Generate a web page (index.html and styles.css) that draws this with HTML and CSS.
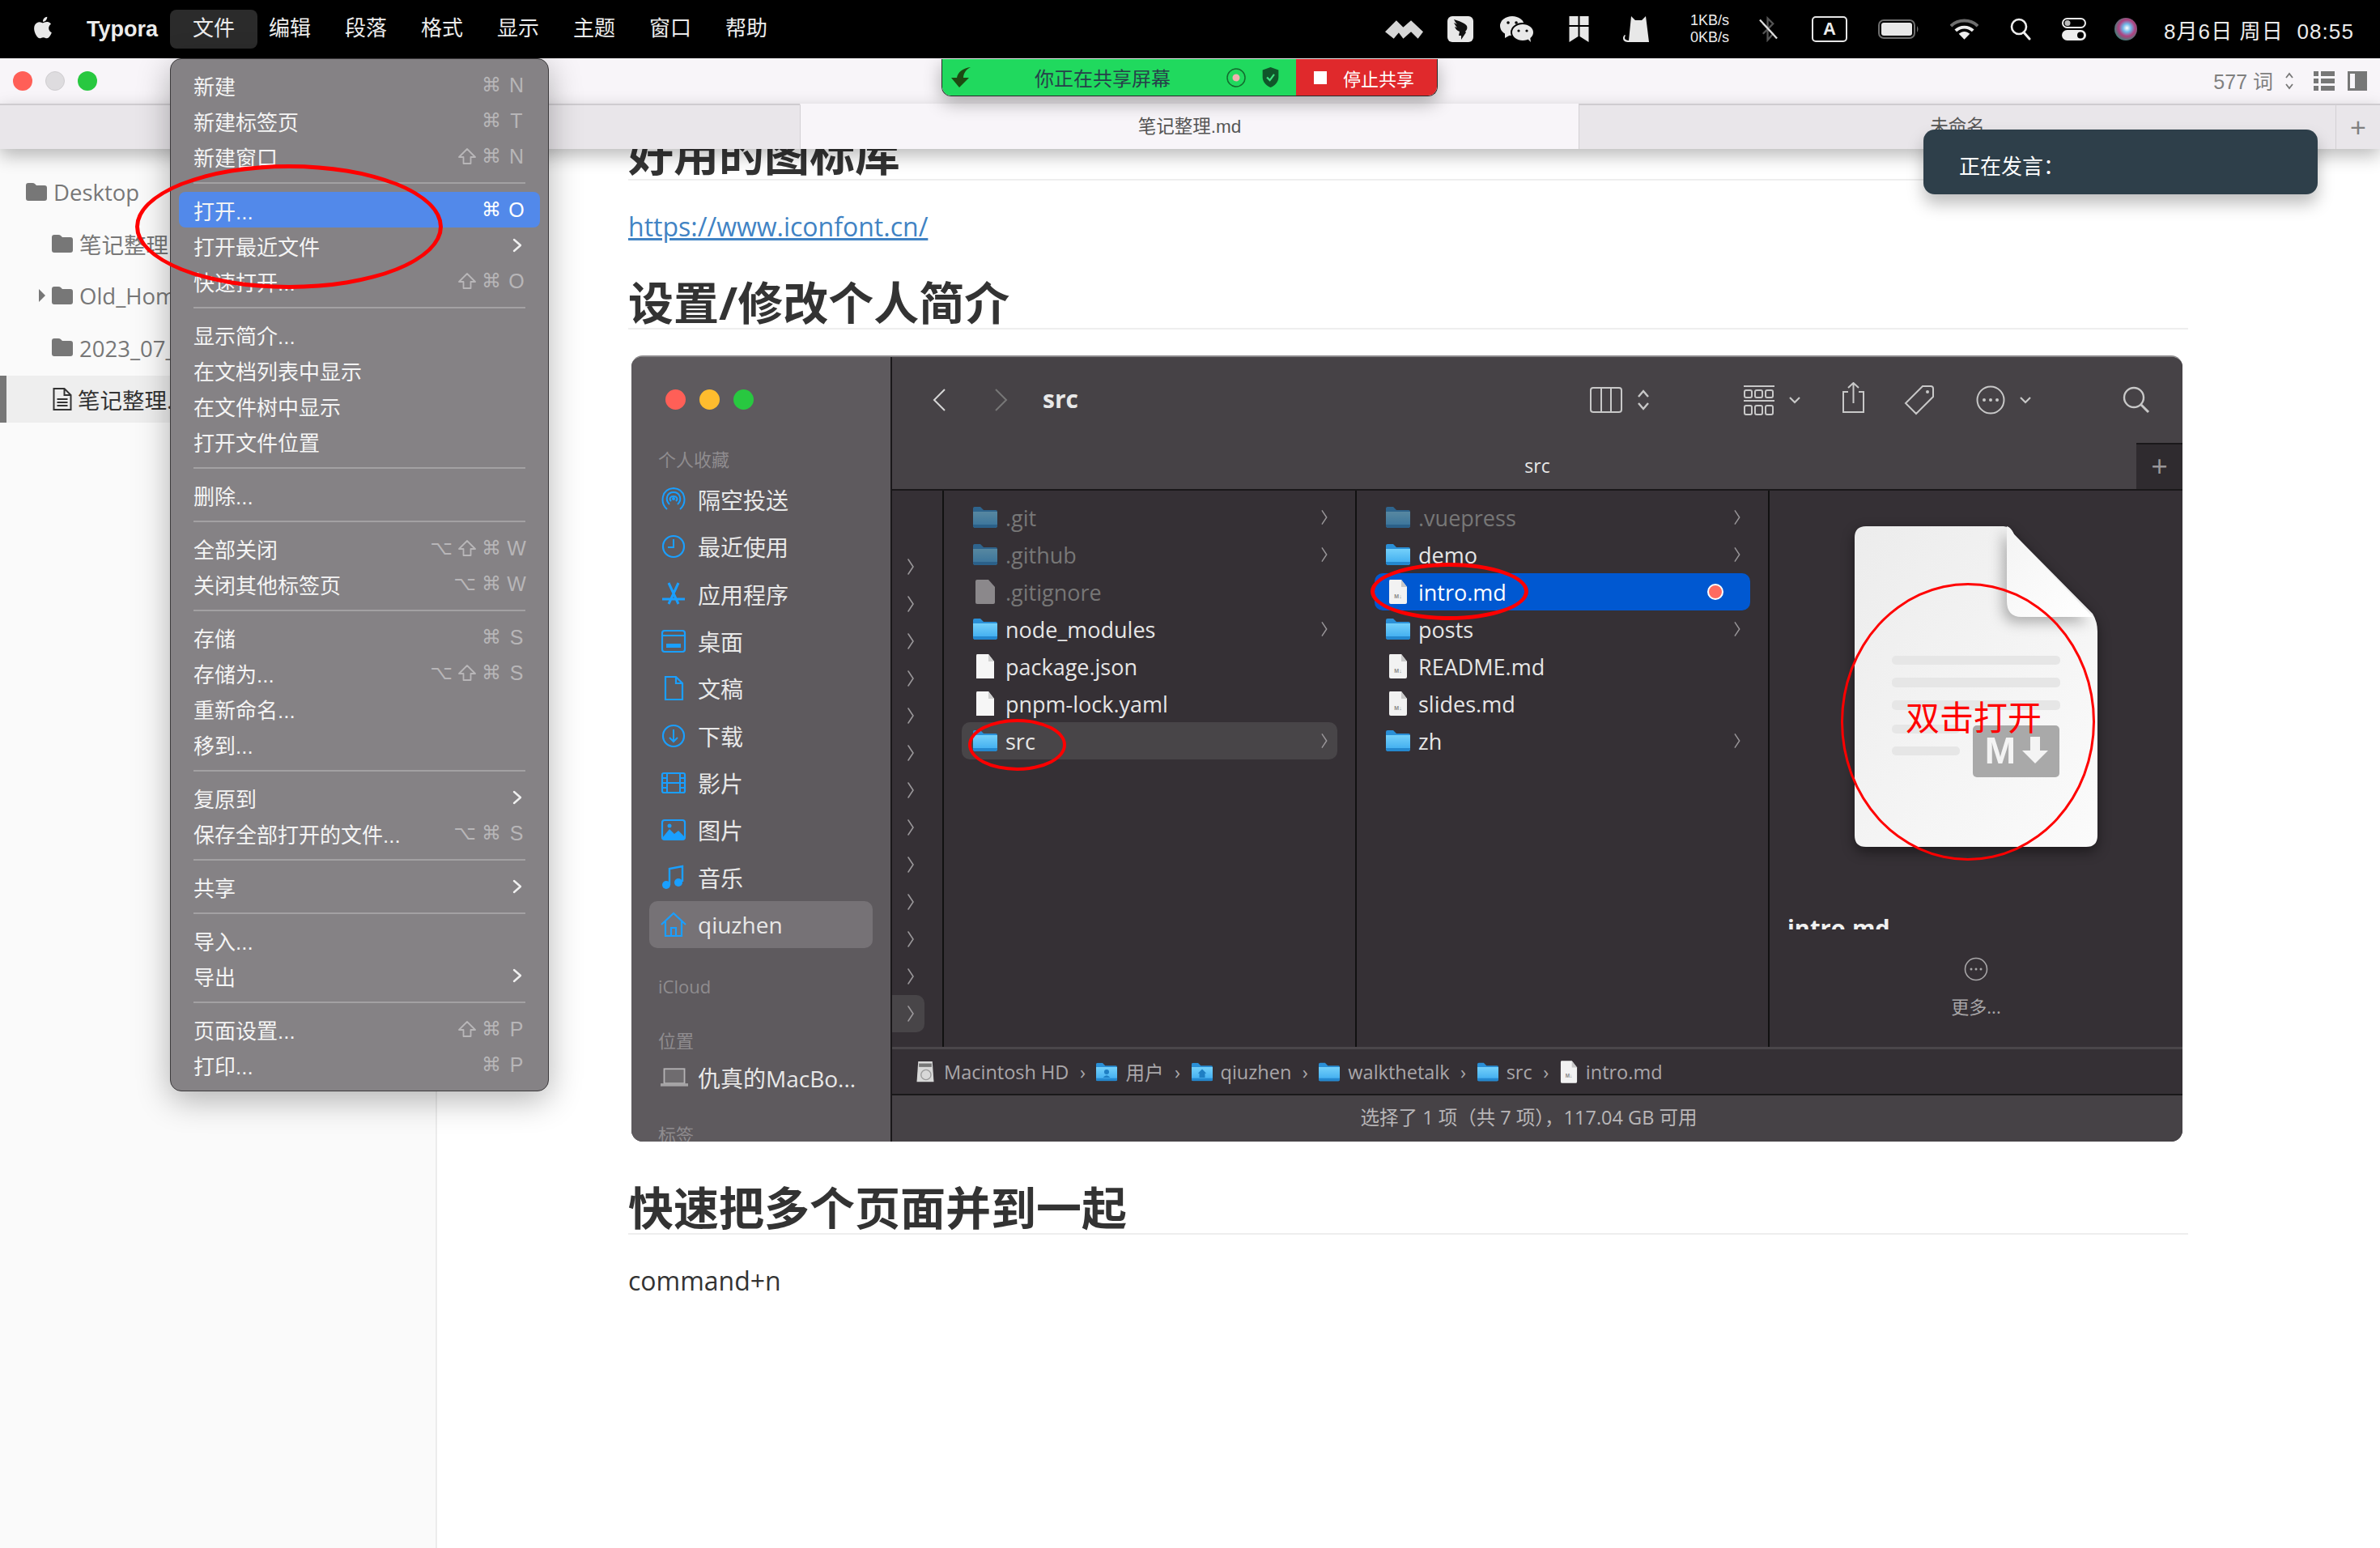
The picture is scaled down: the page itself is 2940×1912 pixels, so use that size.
FILE: index.html
```html
<!DOCTYPE html>
<html lang="zh-CN">
<head>
    <meta charset="UTF-8">
    <title>Typora</title>
    <link rel="stylesheet" href="styles.css">
</head>
<body>
<svg class="defs" aria-hidden="true">
    <defs>
        <linearGradient id="folderBody" x1="0" y1="0" x2="0" y2="1">
            <stop offset="0" stop-color="#74d0fa"/>
            <stop offset="1" stop-color="#3aa9ee"/>
        </linearGradient>
        <radialGradient id="siriBall" cx=".55" cy=".45" r=".6">
            <stop offset="0" stop-color="#ffffff"/>
            <stop offset=".3" stop-color="#6fb7e8"/>
            <stop offset=".6" stop-color="#b0407f"/>
            <stop offset="1" stop-color="#2f8a78"/>
        </radialGradient>
        <linearGradient id="docBody" x1="0" y1="0" x2="1" y2="1">
            <stop offset="0" stop-color="#ececec"/>
            <stop offset="1" stop-color="#fbfbfb"/>
        </linearGradient>
        <linearGradient id="docFold" x1="0" y1="0" x2="1" y2="1">
            <stop offset="0" stop-color="#f4f4f4"/>
            <stop offset="1" stop-color="#ffffff"/>
        </linearGradient>
    </defs>
    <symbol id="folder" viewBox="0 0 30 26">
        <path d="M0 2Q0 0 2 0H9L13 4H28Q30 4 30 6V7H0Z" fill="#2a8fd6"/>
        <path d="M0 6H30V23Q30 26 27 26H3Q0 26 0 23Z" fill="url(#folderBody)"/>
        <path d="M0 22H30V23Q30 26 27 26H3Q0 26 0 23Z" fill="#2488cf"/>
    </symbol>
    <symbol id="graydoc" viewBox="0 0 24 30">
        <path d="M2 0H16L24 9V28Q24 30 22 30H2Q0 30 0 28V2Q0 0 2 0Z" fill="#8b888b"/>
    </symbol>
    <symbol id="plainfile" viewBox="0 0 24 30">
        <path d="M2 0H16L23 9V30H1V2Q1 0 2 0Z" fill="#f6f6f6"/>
        <path d="M16 0V9H23Z" fill="#cfcfcf"/>
    </symbol>
    <symbol id="mdfile" viewBox="0 0 24 30">
        <path d="M2 0H16L23 9V28Q23 30 21 30H3Q1 30 1 28V2Q1 0 2 0Z" fill="#f2f2f2"/>
        <path d="M16 0V9H23Z" fill="#c8c8c8"/>
        <text x="12" y="23" class="md-mini">M↓</text>
    </symbol>
    <symbol id="chev" viewBox="0 0 10 22">
        <path d="M2 2L8 11L2 20" fill="none" stroke="currentColor" stroke-width="1.6" stroke-linecap="round"/>
    </symbol>
    <symbol id="treefolder" viewBox="0 0 26 22">
        <path d="M0 3Q0 0 3 0H8Q10 0 11 1L13 3H23Q26 3 26 6V19Q26 22 23 22H3Q0 22 0 19Z" fill="#777"/>
    </symbol>
    <symbol id="stop-chev" viewBox="0 0 12 18">
        <path d="M2 2L10 9L2 16" fill="none" stroke="#f0f0f0" stroke-width="2.4" stroke-linecap="round" stroke-linejoin="round"/>
    </symbol>
    <symbol id="shiftkey" viewBox="0 0 22 20">
        <path d="M11 1L21 11H15.500V19H6.500V11H1Z" fill="none" stroke="currentColor" stroke-width="1.800" stroke-linejoin="round"/>
    </symbol>
</svg>

<div class="page">
    <!-- macOS menu bar -->
    <header class="menubar">
        <div class="menubar-left">
            <svg class="apple" viewBox="0 0 24 24"><path fill="#e8e8e8" d="M18.71 19.5c-.83 1.24-1.71 2.45-3.05 2.47-1.34.03-1.77-.79-3.29-.79-1.53 0-2 .77-3.27.82-1.31.05-2.3-1.32-3.14-2.53C4.25 17 2.94 12.45 4.7 9.39c.87-1.52 2.43-2.48 4.12-2.51 1.28-.02 2.5.87 3.29.87.78 0 2.26-1.07 3.81-.91.65.03 2.47.26 3.64 1.98-.09.06-2.17 1.28-2.15 3.81.03 3.02 2.65 4.03 2.68 4.04-.03.07-.42 1.44-1.38 2.83M13 3.5c.73-.83 1.94-1.46 2.94-1.5.13 1.17-.34 2.35-1.04 3.19-.69.85-1.83 1.51-2.95 1.42-.15-1.15.41-2.35 1.05-3.11z"/></svg>
            <span class="app-name">Typora</span>
            <span class="mb-item mb-active">文件</span>
            <span class="mb-item">编辑</span>
            <span class="mb-item">段落</span>
            <span class="mb-item">格式</span>
            <span class="mb-item">显示</span>
            <span class="mb-item">主题</span>
            <span class="mb-item">窗口</span>
            <span class="mb-item">帮助</span>
        </div>
        <div class="menubar-right">
            <svg class="st st-mountain" viewBox="0 0 44 21"><path fill="#d6d6d6" d="M0 13L13 0L21 8L10 21ZM15 13L30 0L44 13L38 21L30 13L21 21Z"/></svg>
            <svg class="st st-ding" viewBox="0 0 32 32"><rect width="32" height="32" rx="6" fill="#e8e8e8"/><path fill="#111" d="M8 4C14 6 21 8 24 12C25 15 24 17 22 19L23 20L17 29L17 24L14 24L15 19C12 18 10 16 9 13L12 14C10 12 9 10 8 8L12 10C10 8 9 6 8 4Z"/></svg>
            <svg class="st st-wechat" viewBox="0 0 42 32"><ellipse cx="15" cy="12" rx="15" ry="12" fill="#e8e8e8"/><path d="M6 20L6 27L13 23Z" fill="#e8e8e8"/><ellipse cx="28" cy="20" rx="14" ry="11" fill="#e8e8e8" stroke="#000" stroke-width="2"/><path d="M34 28L38 32L37 25Z" fill="#e8e8e8"/><circle cx="10" cy="8" r="1.8" fill="#000"/><circle cx="20" cy="8" r="1.8" fill="#000"/><circle cx="23" cy="18" r="1.6" fill="#000"/><circle cx="33" cy="18" r="1.6" fill="#000"/></svg>
            <svg class="st st-mark" viewBox="0 0 24 32"><path fill="#e8e8e8" d="M0 0H11V11H0ZM13 0H24V11H13ZM0 13H11V25L0 32ZM13 13H24V32L13 25Z"/></svg>
            <svg class="st st-cat" viewBox="0 0 32 32"><path fill="#e8e8e8" d="M10 0L15 5H23L28 0L32 32H9C5 32 0 32 0 27C0 25 1 24 2 23L3 24C2 25 2 26 2 27C2 29 5 30 7 30Z"/></svg>
            <div class="st-speed"><span>1KB/s</span><span>0KB/s</span></div>
            <svg class="st st-blue" viewBox="0 0 24 32"><path fill="none" stroke="#555" stroke-width="2.4" d="M5 9L18 22L11 30V2L18 9L5 22"/><path stroke="#ddd" stroke-width="2.4" d="M1 4L23 28"/></svg>
            <div class="st st-input">A</div>
            <svg class="st st-battery" viewBox="0 0 51 24"><rect x="1" y="1" width="44" height="22" rx="6" fill="none" stroke="#6e6e6e" stroke-width="2"/><rect x="4" y="4" width="38" height="16" rx="3" fill="#e8e8e8"/><path d="M48 8Q51 12 48 16Z" fill="#6e6e6e"/></svg>
            <svg class="st st-wifi" viewBox="0 0 36 26"><path d="M1 9C10 0 26 0 35 9" fill="none" stroke="#6e6e6e" stroke-width="4"/><path d="M7 15C13 9 23 9 29 15" fill="none" stroke="#eee" stroke-width="4"/><path d="M11 19C15 15 21 15 25 19L18 26Z" fill="#eee"/></svg>
            <svg class="st st-search" viewBox="0 0 26 28"><circle cx="11" cy="11" r="9" fill="none" stroke="#eee" stroke-width="2.6"/><path d="M17 18L24 26" stroke="#eee" stroke-width="3" stroke-linecap="round"/></svg>
            <svg class="st st-control" viewBox="0 0 30 28"><rect x="1" y="1" width="28" height="11" rx="5.5" fill="none" stroke="#eee" stroke-width="2"/><circle cx="7" cy="6.500" r="3.500" fill="#bbb"/><rect y="15" width="30" height="13" rx="6.500" fill="#eee"/><circle cx="23" cy="21.500" r="4" fill="#000"/></svg>
            <svg class="st st-siri" viewBox="0 0 28 28"><circle cx="14" cy="14" r="14" fill="url(#siriBall)"/></svg>
            <span class="st-clock">8月6日 周日&nbsp;&nbsp;08:55</span>
        </div>
    </header>

    <!-- typora title row and tabs -->
    <div class="titlerow">
        <div class="lights">
            <span class="light light-red"></span>
            <span class="light light-idle"></span>
            <span class="light light-green"></span>
        </div>
        <div class="wordcount">
            <span class="wc-text">577 词</span>
            <svg class="wc-updown" viewBox="0 0 12 26"><path d="M2 9L6 4L10 9M2 17L6 22L10 17" fill="none" stroke="#777" stroke-width="1.800"/></svg>
            <svg class="wc-list" viewBox="0 0 26 24"><path fill="#777" d="M0 0H6V6H0ZM9 0H26V6H9ZM0 9H6V15H0ZM9 9H26V15H9ZM0 18H6V24H0ZM9 18H26V24H9Z"/></svg>
            <svg class="wc-panel" viewBox="0 0 24 24"><path fill="#777" d="M0 0H24V24H0ZM3 3V21H9V3Z"/></svg>
        </div>
    </div>
    <div class="tabs">
        <div class="tab tab-first"></div>
        <div class="tab tab-current">笔记整理.md</div>
        <div class="tab tab-third">未命名</div>
        <div class="tab tab-add">+</div>
    </div>

    <div class="body">
        <aside class="tree">
            <div class="tree-row"><svg class="tree-folder"><use href="#treefolder"/></svg>Desktop</div>
            <div class="tree-row tree-sub"><svg class="tree-folder"><use href="#treefolder"/></svg>笔记整理</div>
            <div class="tree-row tree-sub"><span class="tree-arrow"></span><svg class="tree-folder"><use href="#treefolder"/></svg>Old_Homework</div>
            <div class="tree-row tree-sub"><svg class="tree-folder"><use href="#treefolder"/></svg>2023_07_笔记</div>
            <div class="tree-row tree-sub tree-active">
                <svg class="tree-file" viewBox="0 0 24 28"><path d="M2 1H15L23 9V27H2Z M15 1V9H23 M6 14H19M6 18H19M6 22H19" fill="none" stroke="#333" stroke-width="2"/></svg>笔记整理.md
            </div>
        </aside>

        <main class="doc">
            <h2 class="doc-h doc-h-first">好用的图标库</h2>
            <p class="doc-p doc-link"><a href="#">https://www.iconfont.cn/</a></p>
            <h2 class="doc-h">设置/修改个人简介</h2>

            <!-- finder screenshot inside the note -->
            <div class="finder">
                <div class="f-side">
                    <div class="lights f-lights">
                        <span class="light f-light light-red"></span>
                        <span class="light f-light light-yellow"></span>
                        <span class="light f-light light-green"></span>
                    </div>
                    <div class="f-group">个人收藏</div>
                    <div class="f-item"><svg class="f-ic" viewBox="0 0 32 32"><g fill="none" stroke="#1a9fff" stroke-width="2"><path d="M8 28C-1 20 1 3 16 2C31 3 33 20 24 28"/><path d="M11 22C5 16 8 7 16 7C24 7 27 16 21 22"/><path d="M13 18C10 15 12 12 16 12C20 12 22 15 19 18"/></g><circle cx="16" cy="15" r="2" fill="#1a9fff"/></svg>隔空投送</div>
                    <div class="f-item"><svg class="f-ic" viewBox="0 0 32 32"><circle cx="16" cy="16" r="13" fill="none" stroke="#1a9fff" stroke-width="2.200"/><path d="M16 7V17H9" fill="none" stroke="#1a9fff" stroke-width="2"/></svg>最近使用</div>
                    <div class="f-item"><svg class="f-ic" viewBox="0 0 32 32"><path d="M10 2L22 28M22 2L10 28M2 22H30" fill="none" stroke="#1a9fff" stroke-width="3"/></svg>应用程序</div>
                    <div class="f-item"><svg class="f-ic" viewBox="0 0 32 32"><rect x="2" y="3" width="28" height="26" rx="3" fill="none" stroke="#1a9fff" stroke-width="2.200"/><path d="M2 9H30" stroke="#1a9fff" stroke-width="2"/><rect x="7" y="19" width="18" height="5" fill="#1a9fff"/></svg>桌面</div>
                    <div class="f-item"><svg class="f-ic" viewBox="0 0 32 32"><path d="M6 2H19L27 10V30H6ZM19 2V10H27" fill="none" stroke="#1a9fff" stroke-width="2.200"/></svg>文稿</div>
                    <div class="f-item"><svg class="f-ic" viewBox="0 0 32 32"><circle cx="16" cy="16" r="13" fill="none" stroke="#1a9fff" stroke-width="2.200"/><path d="M16 8V23M11 18L16 23L21 18" fill="none" stroke="#1a9fff" stroke-width="2"/></svg>下载</div>
                    <div class="f-item"><svg class="f-ic" viewBox="0 0 32 32"><rect x="2" y="4" width="28" height="24" rx="2" fill="none" stroke="#1a9fff" stroke-width="2.200"/><path d="M8 4V28M24 4V28M8 16H24M2 10H8M2 16H8M2 22H8M24 10H30M24 16H30M24 22H30" stroke="#1a9fff" stroke-width="2"/></svg>影片</div>
                    <div class="f-item"><svg class="f-ic" viewBox="0 0 32 32"><rect x="2" y="4" width="28" height="24" rx="3" fill="none" stroke="#1a9fff" stroke-width="2.200"/><path d="M2 26L11 15L17 21L22 17L30 25V28H2Z" fill="#1a9fff"/><circle cx="11" cy="11" r="2.500" fill="#1a9fff"/></svg>图片</div>
                    <div class="f-item"><svg class="f-ic" viewBox="0 0 32 32"><path d="M11 25V5L27 2V21" fill="none" stroke="#1a9fff" stroke-width="2.400"/><ellipse cx="7" cy="25" rx="5" ry="5" fill="#1a9fff"/><ellipse cx="22" cy="22" rx="5" ry="5" fill="#1a9fff"/></svg>音乐</div>
                    <div class="f-item f-item-on"><svg class="f-ic" viewBox="0 0 32 32"><path d="M1 16L16 2L31 16M6 12V30H26V12M13 30V20H19V30" fill="none" stroke="#1a9fff" stroke-width="2.200"/></svg>qiuzhen</div>
                    <div class="f-group f-group-cloud">iCloud</div>
                    <div class="f-group f-group-place">位置</div>
                    <div class="f-item f-item-disk"><svg class="f-ic" viewBox="0 0 38 26"><rect x="5" y="1" width="28" height="20" fill="#6f6c6f" stroke="#b5b3b5" stroke-width="2"/><rect x="0" y="21" width="38" height="4" fill="#a5a3a5"/></svg>仇真的MacBo...</div>
                    <div class="f-group f-group-tag">标签</div>
                </div>
                <div class="f-main">
                    <div class="f-toolbar">
                        <svg class="tb tb-back" viewBox="0 0 18 30"><path d="M16 2L3 15L16 28" fill="none" stroke="#d6d6d6" stroke-width="2"/></svg>
                        <svg class="tb tb-fwd" viewBox="0 0 18 30"><path d="M2 2L15 15L2 28" fill="none" stroke="#777" stroke-width="2"/></svg>
                        <span class="f-title">src</span>
                        <svg class="tb tb-cols" viewBox="0 0 40 32"><path d="M4 1H36Q39 1 39 4V28Q39 31 36 31H4Q1 31 1 28V4Q1 1 4 1ZM14 1V31M26 1V31" fill="none" stroke="#c8c8c8" stroke-width="2"/></svg>
                        <svg class="tb tb-updown" viewBox="0 0 16 28"><path d="M2 10L8 3L14 10M2 18L8 25L14 18" fill="none" stroke="#c8c8c8" stroke-width="2.400"/></svg>
                        <svg class="tb tb-grid" viewBox="0 0 38 37"><path d="M0 1H38M0 19H38" stroke="#c8c8c8" stroke-width="2"/><g fill="none" stroke="#c8c8c8" stroke-width="2"><rect x="1" y="6" width="9" height="9" rx="2"/><rect x="14" y="6" width="9" height="9" rx="2"/><rect x="27" y="6" width="9" height="9" rx="2"/><rect x="1" y="25" width="9" height="11" rx="2"/><rect x="14" y="25" width="9" height="11" rx="2"/><rect x="27" y="25" width="9" height="11" rx="2"/></g></svg>
                        <svg class="tb tb-drop tb-drop-a" viewBox="0 0 16 10"><path d="M2 2L8 8L14 2" fill="none" stroke="#c8c8c8" stroke-width="2.200"/></svg>
                        <svg class="tb tb-share" viewBox="0 0 31 39"><path d="M9 12H3V37H28V12H22M15.500 26V1M9 7L15.500 1L22 7" fill="none" stroke="#c8c8c8" stroke-width="2"/></svg>
                        <svg class="tb tb-tag" viewBox="0 0 38 38"><path d="M23 2H33Q36 2 36 5V15L15 36L2 23Z" fill="none" stroke="#c8c8c8" stroke-width="2"/><circle cx="29" cy="9" r="2" fill="#c8c8c8"/></svg>
                        <svg class="tb tb-more" viewBox="0 0 36 36"><circle cx="18" cy="18" r="16.500" fill="none" stroke="#c8c8c8" stroke-width="2"/><circle cx="10" cy="18" r="2" fill="#c8c8c8"/><circle cx="18" cy="18" r="2" fill="#c8c8c8"/><circle cx="26" cy="18" r="2" fill="#c8c8c8"/></svg>
                        <svg class="tb tb-drop tb-drop-b" viewBox="0 0 16 10"><path d="M2 2L8 8L14 2" fill="none" stroke="#c8c8c8" stroke-width="2.200"/></svg>
                        <svg class="tb tb-search" viewBox="0 0 34 34"><circle cx="14" cy="14" r="12" fill="none" stroke="#c8c8c8" stroke-width="2.400"/><path d="M23 23L32 32" stroke="#c8c8c8" stroke-width="3"/></svg>
                    </div>
                    <div class="f-tabbar">
                        <span class="f-tabname">src</span>
                        <span class="f-tabadd">+</span>
                    </div>
                    <div class="f-cols">
                        <div class="f-col0">
                            <svg class="c0"><use href="#chev"/></svg>
                            <svg class="c0"><use href="#chev"/></svg>
                            <svg class="c0"><use href="#chev"/></svg>
                            <svg class="c0"><use href="#chev"/></svg>
                            <svg class="c0"><use href="#chev"/></svg>
                            <svg class="c0"><use href="#chev"/></svg>
                            <svg class="c0"><use href="#chev"/></svg>
                            <svg class="c0"><use href="#chev"/></svg>
                            <svg class="c0"><use href="#chev"/></svg>
                            <svg class="c0"><use href="#chev"/></svg>
                            <svg class="c0"><use href="#chev"/></svg>
                            <svg class="c0"><use href="#chev"/></svg>
                            <svg class="c0 c0-on"><use href="#chev"/></svg>
                        </div>
                        <div class="f-col">
                            <div class="f-row dim"><svg class="fi"><use href="#folder"/></svg><span class="fn">.git</span><svg class="rc"><use href="#chev"/></svg></div>
                            <div class="f-row dim"><svg class="fi"><use href="#folder"/></svg><span class="fn">.github</span><svg class="rc"><use href="#chev"/></svg></div>
                            <div class="f-row dim-file"><svg class="fi fi-doc"><use href="#graydoc"/></svg><span class="fn">.gitignore</span></div>
                            <div class="f-row"><svg class="fi"><use href="#folder"/></svg><span class="fn">node_modules</span><svg class="rc"><use href="#chev"/></svg></div>
                            <div class="f-row"><svg class="fi fi-doc"><use href="#plainfile"/></svg><span class="fn">package.json</span></div>
                            <div class="f-row"><svg class="fi fi-doc"><use href="#plainfile"/></svg><span class="fn">pnpm-lock.yaml</span></div>
                            <div class="f-row f-row-hl"><svg class="fi"><use href="#folder"/></svg><span class="fn">src</span><svg class="rc"><use href="#chev"/></svg></div>
                        </div>
                        <div class="f-col">
                            <div class="f-row dim"><svg class="fi"><use href="#folder"/></svg><span class="fn">.vuepress</span><svg class="rc"><use href="#chev"/></svg></div>
                            <div class="f-row"><svg class="fi"><use href="#folder"/></svg><span class="fn">demo</span><svg class="rc"><use href="#chev"/></svg></div>
                            <div class="f-row f-row-sel"><svg class="fi fi-doc"><use href="#mdfile"/></svg><span class="fn">intro.md</span><span class="tagdot"></span></div>
                            <div class="f-row"><svg class="fi"><use href="#folder"/></svg><span class="fn">posts</span><svg class="rc"><use href="#chev"/></svg></div>
                            <div class="f-row"><svg class="fi fi-doc"><use href="#mdfile"/></svg><span class="fn">README.md</span></div>
                            <div class="f-row"><svg class="fi fi-doc"><use href="#mdfile"/></svg><span class="fn">slides.md</span></div>
                            <div class="f-row"><svg class="fi"><use href="#folder"/></svg><span class="fn">zh</span><svg class="rc"><use href="#chev"/></svg></div>
                        </div>
                        <div class="f-preview">
                            <svg class="bigdoc" viewBox="0 0 300 396">
                                <path d="M14 0H184Q192 0 197 10L294 108Q300 118 300 130V382Q300 396 286 396H14Q0 396 0 382V14Q0 0 14 0Z" fill="url(#docBody)"/>
                                <path class="bigdoc-fold" d="M188 0Q193 1 197 10L294 112H206Q188 112 188 92Z" fill="url(#docFold)"/>
                                <g fill="#e6e6e6">
                                    <rect x="46" y="160" width="208" height="11" rx="5"/>
                                    <rect x="46" y="187" width="208" height="12" rx="5"/>
                                    <rect x="46" y="215" width="208" height="12" rx="5"/>
                                    <rect x="46" y="245" width="84" height="11" rx="5"/>
                                    <rect x="46" y="272" width="84" height="11" rx="5"/>
                                </g>
                                <rect x="146" y="246" width="107" height="64" rx="5" fill="#a9a9a9"/>
                                <text x="180" y="293" class="md-big">M</text>
                                <path d="M217 260H229V277H239L223 293L207 277H217Z" fill="#f4f4f4"/>
                            </svg>
                            <div class="pv-name">intro.md</div>
                            <svg class="pv-more" viewBox="0 0 30 30"><circle cx="15" cy="15" r="13.500" fill="none" stroke="#a8a6a8" stroke-width="1.600"/><circle cx="9" cy="15" r="1.500" fill="#a8a6a8"/><circle cx="15" cy="15" r="1.500" fill="#a8a6a8"/><circle cx="21" cy="15" r="1.500" fill="#a8a6a8"/></svg>
                            <div class="pv-label">更多...</div>
                        </div>
                    </div>
                    <div class="f-path">
                        <svg class="p-ic p-hd" viewBox="0 0 26 32"><path d="M3 1H23L25 30H1Z" fill="#d8d8d8"/><circle cx="14" cy="20" r="7" fill="none" stroke="#9a9a9a" stroke-width="1.500"/><rect x="4" y="4" width="18" height="5" fill="#777"/></svg>
                        <span>Macintosh HD</span><span class="p-sep">›</span>
                        <svg class="p-ic" viewBox="0 0 30 26"><use href="#folder" width="30" height="26"/><circle cx="15" cy="13" r="3.500" fill="#1f7fc4"/><path d="M10 21Q15 15 20 21Z" fill="#1f7fc4"/></svg><span>用户</span><span class="p-sep">›</span>
                        <svg class="p-ic" viewBox="0 0 30 26"><use href="#folder" width="30" height="26"/><path d="M9 15L15 9L21 15H19V21H11V15Z" fill="#1f7fc4"/></svg><span>qiuzhen</span><span class="p-sep">›</span>
                        <svg class="p-ic"><use href="#folder"/></svg><span>walkthetalk</span><span class="p-sep">›</span>
                        <svg class="p-ic"><use href="#folder"/></svg><span>src</span><span class="p-sep">›</span>
                        <svg class="p-ic p-file"><use href="#mdfile"/></svg><span>intro.md</span>
                    </div>
                    <div class="f-status">选择了 1 项（共 7 项），117.04 GB 可用</div>
                </div>
                <span class="mark mark-src"></span>
                <span class="mark mark-intro"></span>
                <span class="mark mark-doc"></span>
                <span class="dbl-click">双击打开</span>
            </div>

            <h2 class="doc-h doc-h-last">快速把多个页面并到一起</h2>
            <p class="doc-p">command+n</p>
        </main>
    </div>

    <!-- file menu -->
    <nav class="menu">
        <div class="m-row"><span>新建</span><span class="keys"><span>⌘</span><i>N</i></span></div>
        <div class="m-row"><span>新建标签页</span><span class="keys"><span>⌘</span><i>T</i></span></div>
        <div class="m-row"><span>新建窗口</span><span class="keys"><svg class="k-shift"><use href="#shiftkey"/></svg><span>⌘</span><i>N</i></span></div>
        <hr class="m-sep">
        <div class="m-row m-on"><span>打开...</span><span class="keys"><span>⌘</span><i>O</i></span></div>
        <div class="m-row"><span>打开最近文件</span><svg class="m-chev"><use href="#stop-chev"/></svg></div>
        <div class="m-row"><span>快速打开...</span><span class="keys"><svg class="k-shift"><use href="#shiftkey"/></svg><span>⌘</span><i>O</i></span></div>
        <hr class="m-sep">
        <div class="m-row"><span>显示简介...</span></div>
        <div class="m-row"><span>在文档列表中显示</span></div>
        <div class="m-row"><span>在文件树中显示</span></div>
        <div class="m-row"><span>打开文件位置</span></div>
        <hr class="m-sep">
        <div class="m-row"><span>删除...</span></div>
        <hr class="m-sep">
        <div class="m-row"><span>全部关闭</span><span class="keys"><span>⌥</span><svg class="k-shift"><use href="#shiftkey"/></svg><span>⌘</span><i>W</i></span></div>
        <div class="m-row"><span>关闭其他标签页</span><span class="keys"><span>⌥</span><span>⌘</span><i>W</i></span></div>
        <hr class="m-sep">
        <div class="m-row"><span>存储</span><span class="keys"><span>⌘</span><i>S</i></span></div>
        <div class="m-row"><span>存储为...</span><span class="keys"><span>⌥</span><svg class="k-shift"><use href="#shiftkey"/></svg><span>⌘</span><i>S</i></span></div>
        <div class="m-row"><span>重新命名...</span></div>
        <div class="m-row"><span>移到...</span></div>
        <hr class="m-sep">
        <div class="m-row"><span>复原到</span><svg class="m-chev"><use href="#stop-chev"/></svg></div>
        <div class="m-row"><span>保存全部打开的文件...</span><span class="keys"><span>⌥</span><span>⌘</span><i>S</i></span></div>
        <hr class="m-sep">
        <div class="m-row"><span>共享</span><svg class="m-chev"><use href="#stop-chev"/></svg></div>
        <hr class="m-sep">
        <div class="m-row"><span>导入...</span></div>
        <div class="m-row"><span>导出</span><svg class="m-chev"><use href="#stop-chev"/></svg></div>
        <hr class="m-sep">
        <div class="m-row"><span>页面设置...</span><span class="keys"><svg class="k-shift"><use href="#shiftkey"/></svg><span>⌘</span><i>P</i></span></div>
        <div class="m-row"><span>打印...</span><span class="keys"><span>⌘</span><i>P</i></span></div>
    </nav>
    <span class="mark mark-menu"></span>

    <!-- meeting overlays -->
    <div class="sharebar">
        <div class="share-green">
            <svg class="sh-arrow" viewBox="0 0 24 26"><path fill="#1d4a12" d="M24 0C15 1 8 6 7 13H0L10 25L22 13H15C15 8 18 3 24 0Z"/></svg>
            <span class="sh-text">你正在共享屏幕</span>
            <svg class="sh-radio" viewBox="0 0 24 24"><circle cx="12" cy="12" r="11" fill="none" stroke="#136b2e" stroke-width="1.500"/><circle cx="12" cy="12" r="4.500" fill="#f0b0b0"/></svg>
            <svg class="sh-shield" viewBox="0 0 22 28"><path fill="#10552a" d="M11 0L22 4V14C22 21 16 26 11 28C6 26 0 21 0 14V4Z"/><path d="M6 14L10 18L16 10" fill="none" stroke="#3fe07f" stroke-width="2.500"/></svg>
        </div>
        <div class="share-red"><span class="sh-stop"></span>停止共享</div>
    </div>
    <div class="toast">正在发言：</div>
</div>
</body>
</html>
```

FILE: styles.css
```css
* {
    box-sizing: border-box;
}
html, body {
    margin: 0;
    padding: 0;
    background: #fff;
}
.defs {
    position: absolute;
    width: 0;
    height: 0;
}
.md-mini {
    font: bold 7px "Liberation Sans", sans-serif;
    fill: #8a8a8a;
    text-anchor: middle;
}
.md-big {
    font: bold 46px "Liberation Sans", sans-serif;
    fill: #f4f4f4;
    text-anchor: middle;
}
.page {
    position: relative;
    width: 2940px;
    height: 1912px;
    overflow: hidden;
    display: flex;
    flex-direction: column;
    font-family: "Liberation Sans", "Noto Sans CJK SC", sans-serif;
}

/* menu bar */
.menubar {
    height: 72px;
    flex: none;
    background: #000;
    color: #ececec;
    display: flex;
    justify-content: space-between;
    align-items: center;
    padding: 0 32px 0 37px;
    font-size: 26px;
}
.menubar-left,
.menubar-right {
    display: flex;
    align-items: center;
}
.apple {
    width: 32px;
    height: 34px;
    margin-top: -4px;
}
.app-name {
    margin-left: 38px;
    font-weight: bold;
    font-size: 27px;
    width: 90px;
}
.mb-item {
    height: 48px;
    line-height: 46px;
    padding: 0 28px;
    margin-right: -14px;
    border-radius: 8px;
}
.mb-active {
    background: #2b2b2b;
    margin-left: 13px;
}
.st {
    display: block;
    flex: none;
}
.st-mountain { width: 47px; height: 23px; }
.st-ding { width: 32px; height: 32px; margin-left: 30px; }
.st-wechat { width: 42px; height: 32px; margin-left: 33px; }
.st-mark { width: 25px; height: 32px; margin-left: 43px; }
.st-cat { width: 34px; height: 32px; margin-left: 41px; }
.st-speed {
    display: flex;
    flex-direction: column;
    align-items: flex-end;
    width: 51px;
    margin-left: 47px;
    font-size: 18px;
    line-height: 21px;
}
.st-blue { width: 23px; height: 32px; margin-left: 37px; }
.st-input {
    width: 44px;
    height: 32px;
    margin-left: 42px;
    border: 2px solid #e6e6e6;
    border-radius: 5px;
    text-align: center;
    font-size: 22px;
    font-weight: bold;
    line-height: 28px;
}
.st-battery { width: 51px; height: 24px; margin-left: 38px; }
.st-wifi { width: 35px; height: 26px; margin-left: 38px; }
.st-search { width: 26px; height: 28px; margin-left: 39px; }
.st-control { width: 30px; height: 28px; margin-left: 38px; }
.st-siri { width: 28px; height: 28px; margin-left: 35px; }
.st-clock {
    margin-left: 33px;
    font-size: 26px;
    letter-spacing: 1.100px;
    white-space: nowrap;
}

/* typora window head */
.titlerow {
    height: 56px;
    flex: none;
    background: #f8f5f9;
    display: flex;
    justify-content: space-between;
    align-items: center;
    padding: 0 16px;
}
.lights {
    display: flex;
    gap: 16px;
}
.light {
    width: 24px;
    height: 24px;
    border-radius: 50%;
    display: block;
}
.light-red { background: #ff5f57; }
.light-idle { background: #dedcdf; border: 1px solid #cfcdd0; }
.light-green { background: #28c840; }
.light-yellow { background: #febc2e; }
.wordcount {
    display: flex;
    align-items: center;
    color: #808080;
    font-size: 25px;
}
.wc-text { margin-top: -2px; }
.wc-updown { width: 12px; height: 26px; margin-left: 14px; }
.wc-list { width: 26px; height: 24px; margin-left: 24px; }
.wc-panel { width: 24px; height: 24px; margin-left: 16px; }
.tabs {
    position: relative;
    z-index: 2;
    height: 56px;
    flex: none;
    display: flex;
    background: #e9e6ea;
    box-shadow: 0 8px 22px rgba(0, 0, 0, .28);
    color: #555;
    font-size: 22.500px;
}
.tab {
    text-align: center;
    line-height: 54px;
    border-top: 2px solid #cfccd0;
    border-left: 1px solid #d3d0d4;
}
.tab-first { width: 988px; border-left: 0; }
.tab-current { width: 962px; background: #f8f5f9; border-top-color: #f8f5f9; }
.tab-third { width: 935px; }
.tab-add { flex: 1; font-size: 34px; color: #808080; font-weight: normal; }

/* sidebar and doc */
.body {
    flex: 1;
    min-height: 0;
    display: flex;
}
.tree {
    width: 540px;
    flex: none;
    background: #fafafa;
    border-right: 2px solid #ececec;
    padding-top: 24px;
    display: flex;
    flex-direction: column;
    gap: 6px;
    overflow: hidden;
    font-family: "Open Sans", "Noto Sans CJK SC", sans-serif;
    font-size: 27.500px;
    color: #777;
}
.tree-row {
    height: 58px;
    display: flex;
    align-items: center;
    padding-left: 32px;
    white-space: nowrap;
}
.tree-sub {
    padding-left: 64px;
}
.tree-folder {
    width: 26px;
    height: 22px;
    flex: none;
    margin-right: 8px;
}
.tree-arrow {
    width: 0;
    height: 0;
    margin-left: -16px;
    margin-right: 8px;
    border-left: 8px solid #777;
    border-top: 8px solid transparent;
    border-bottom: 8px solid transparent;
}
.tree-active {
    background: #eee;
    border-left: 8px solid #777;
    padding-left: 56px;
    color: #333;
}
.tree-file {
    width: 25px;
    height: 28px;
    margin-right: 7px;
    flex: none;
}
.doc {
    flex: 1;
    min-width: 0;
    overflow: hidden;
    padding: 0 237px 0 236px;
    font-family: "Open Sans", "Noto Sans CJK SC", sans-serif;
    color: #333;
}
.doc-h {
    margin: 0;
    height: 64px;
    font-size: 56px;
    line-height: 60px;
    font-weight: bold;
    border-bottom: 2px solid #eee;
}
.doc-h-first {
    margin-top: -25px;
}
.doc-p {
    margin: 0;
    font-size: 32px;
    line-height: 48px;
}
.doc-link {
    margin: 33px 0 39px;
}
.doc-link a {
    color: #4183c4;
}
.doc-h-last {
    margin-top: 51px;
    margin-bottom: 33px;
}

/* finder picture */
.finder {
    position: relative;
    margin: 32px 0 0 4px;
    width: 1916px;
    height: 971px;
    border-radius: 14px;
    border-top: 2px solid #8a888a;
    overflow: hidden;
    display: flex;
    background: #353035;
    color: #e8e8e8;
}
.f-side {
    width: 322px;
    flex: none;
    background: #5e5a5e;
    border-right: 2px solid #1a181a;
    position: relative;
    padding: 0 22px;
}
.f-lights {
    margin: 40px 0 46px 20px;
    gap: 17px;
}
.f-light {
    width: 25px;
    height: 25px;
}
.f-group {
    font-size: 22px;
    line-height: 30px;
    color: #8f8c8f;
    margin: 0 0 6px 11px;
}
.f-item {
    height: 58.300px;
    display: flex;
    align-items: center;
    padding-left: 14px;
    font-size: 28px;
    white-space: nowrap;
    border-radius: 10px;
}
.f-item-on {
    background: #767276;
}
.f-ic {
    width: 32px;
    height: 32px;
    margin-right: 14px;
    flex: none;
}
.f-group-cloud { margin-top: 32px; margin-bottom: 0; }
.f-group-place { margin-top: 37px; margin-bottom: 0; }
.f-item-disk { margin-top: 2px; }
.f-item-disk .f-ic { height: 26px; width: 34px; margin-right: 12px; }
.f-group-tag { margin-top: 26px; }
.f-main {
    flex: 1;
    min-width: 0;
    display: flex;
    flex-direction: column;
}
.f-toolbar {
    height: 106px;
    flex: none;
    background: #464246;
    display: flex;
    align-items: center;
    padding: 0 40px 0 49px;
}
.tb {
    display: block;
    flex: none;
}
.tb-back, .tb-fwd { width: 18px; height: 30px; }
.tb-fwd { margin-left: 59px; }
.f-title {
    margin-left: 42px;
    margin-top: -3px;
    font-size: 30px;
    font-weight: bold;
}
.tb-cols { width: 40px; height: 32px; margin-left: auto; }
.tb-updown { width: 16px; height: 28px; margin-left: 18px; }
.tb-grid { width: 38px; height: 37px; margin-left: 116px; }
.tb-drop { width: 16px; height: 10px; }
.tb-drop-a { margin-left: 17px; }
.tb-share { width: 31px; height: 39px; margin-left: 49px; margin-top: -6px; }
.tb-tag { width: 38px; height: 38px; margin-left: 47px; }
.tb-more { width: 36px; height: 36px; margin-left: 51px; }
.tb-drop-b { margin-left: 17px; }
.tb-search { width: 34px; height: 34px; margin-left: 112px; }
.f-tabbar {
    height: 59px;
    flex: none;
    background: #464246;
    border-bottom: 2px solid #1a181a;
    display: flex;
}
.f-tabname {
    flex: 1;
    padding-left: 57px;
    text-align: center;
    font-size: 23px;
    line-height: 56px;
}
.f-tabadd {
    width: 57px;
    background: #2f2b2f;
    border-top: 2px solid #1a181a;
    color: #9a979a;
    text-align: center;
    font-size: 36px;
    line-height: 54px;
}
.f-cols {
    flex: 1;
    min-height: 0;
    display: flex;
}
.f-col0 {
    width: 62px;
    flex: none;
    padding-top: 71px;
    color: #9a979a;
}
.c0 {
    display: block;
    width: 40px;
    height: 46px;
    padding: 12px 12px 12px 18px;
}
.c0-on {
    background: #484548;
    border-radius: 0 10px 10px 0;
}
.f-col {
    width: 510px;
    flex: none;
    border-left: 2px solid #111;
    padding: 10px 22px 0;
    font-size: 27px;
}
.f-row {
    height: 46px;
    display: flex;
    align-items: center;
    padding-left: 14px;
    border-radius: 10px;
    color: #e6e6e6;
    position: relative;
}
.fi {
    width: 30px;
    height: 26px;
    flex: none;
}
.fi-doc {
    height: 30px;
}
.fn {
    margin-left: 10px;
    white-space: nowrap;
}
.rc {
    position: absolute;
    right: 11px;
    top: 13px;
    width: 10px;
    height: 20px;
    color: #9a979a;
}
.dim .fi { opacity: .55; }
.dim .fn, .dim-file .fn { color: #777; }
.f-row-hl {
    background: #484548;
}
.f-row-sel {
    background: #0058d1;
    color: #fff;
}
.tagdot {
    position: absolute;
    right: 33px;
    top: 13px;
    width: 20px;
    height: 20px;
    border-radius: 50%;
    background: #ff6b5f;
    border: 2px solid #fff;
}
.f-preview {
    flex: 1;
    border-left: 2px solid #111;
    display: flex;
    flex-direction: column;
    align-items: center;
    padding-top: 44px;
    position: relative;
}
.bigdoc {
    width: 300px;
    height: 396px;
    flex: none;
    filter: drop-shadow(0 6px 8px rgba(0, 0, 0, .45));
}
.bigdoc-fold {
    filter: drop-shadow(-5px 7px 8px rgba(0, 0, 0, .28));
}
.pv-name {
    align-self: flex-start;
    margin: 83px 0 0 22px;
    height: 19px;
    overflow: hidden;
    font-size: 29px;
    line-height: 33px;
    font-weight: bold;
    color: #f0f0f0;
}
.pv-more {
    width: 30px;
    height: 30px;
    margin-top: 34px;
    flex: none;
}
.pv-label {
    margin-top: 14px;
    font-size: 22px;
    color: #a8a6a8;
}
.f-path {
    height: 60px;
    flex: none;
    border-top: 3px solid #4a464a;
    border-bottom: 2px solid #1a181a;
    display: flex;
    align-items: center;
    gap: 10px;
    padding-left: 28px;
    font-size: 23.500px;
    color: #aaa7aa;
    white-space: nowrap;
}
.p-ic {
    width: 26px;
    height: 28px;
    flex: none;
}
.p-file {
    width: 22px;
}
.p-sep {
    margin: 0 3.500px;
}
.f-status {
    height: 57px;
    flex: none;
    background: #464246;
    text-align: center;
    font-size: 23.500px;
    line-height: 54px;
    color: #b8b6b8;
    padding-right: 21px;
}
.mark {
    position: absolute;
    z-index: 5;
    border: 4px solid #f00;
    border-radius: 50%;
}
.mark-src { left: 416px; top: 447px; width: 121px; height: 64px; }
.mark-intro { left: 913px; top: 254px; width: 195px; height: 71px; border-width: 5px; }
.mark-doc { left: 1494px; top: 279px; width: 314px; height: 343px; border-width: 3px; }
.mark-menu { left: 167px; top: 203px; width: 380px; height: 154px; border-width: 5px; }
.dbl-click {
    position: absolute;
    z-index: 5;
    left: 1574px;
    top: 415px;
    font-size: 42px;
    line-height: 60px;
    color: #f00;
}

/* file menu */
.menu {
    position: absolute;
    z-index: 4;
    left: 210px;
    top: 72px;
    width: 468px;
    height: 1276px;
    padding: 10px 10px;
    background: #858285;
    border-radius: 14px;
    border: 1px solid #3c3a3c;
    box-shadow: 0 10px 40px rgba(0, 0, 0, .3);
    color: #f4f4f4;
    font-size: 26px;
}
.m-row {
    height: 44px;
    display: flex;
    justify-content: space-between;
    align-items: center;
    padding: 0 17px 0 18px;
    border-radius: 8px;
    white-space: nowrap;
}
.m-on {
    background: #5289ea;
}
.m-sep {
    margin: 10px 18px 10px;
    border: 0;
    height: 2px;
    background: #a3a1a3;
}
.keys {
    font-family: "DejaVu Sans", sans-serif;
    font-size: 24px;
    color: #b8b6b8;
    display: flex;
    align-items: center;
    gap: 7px;
}
.keys i {
    font-style: normal;
    font-family: "Liberation Sans", sans-serif;
    font-size: 25px;
    width: 24px;
    text-align: center;
}
.k-shift {
    width: 22px;
    height: 20px;
}
.m-on .keys {
    color: #fff;
}
.m-chev {
    width: 12px;
    height: 18px;
    margin-right: 5px;
}

/* meeting overlays */
.sharebar {
    position: absolute;
    z-index: 6;
    left: 1163px;
    top: 73px;
    width: 613px;
    height: 46px;
    display: flex;
    border-radius: 0 0 12px 12px;
    border: 1px solid #2a2a2a;
    border-top: 0;
    overflow: hidden;
    box-shadow: 0 8px 22px rgba(0, 0, 0, .3);
}
.share-green {
    width: 437px;
    background: #20d95e;
    display: flex;
    align-items: center;
    color: #27404a;
    font-size: 24px;
    padding-left: 11px;
}
.sh-arrow { width: 24px; height: 26px; flex: none; }
.sh-text { margin-left: 79px; white-space: nowrap; }
.sh-radio { width: 24px; height: 24px; margin-left: 69px; }
.sh-shield { width: 21px; height: 25px; margin-left: 20px; }
.share-red {
    flex: 1;
    background: #e0292c;
    display: flex;
    align-items: center;
    color: #fff;
    font-size: 22px;
    padding-left: 22px;
}
.sh-stop {
    width: 16px;
    height: 16px;
    background: #fff;
    margin-right: 20px;
}
.toast {
    position: absolute;
    z-index: 6;
    left: 2376px;
    top: 160px;
    width: 487px;
    height: 80px;
    padding-left: 44px;
    background: #2e3f4a;
    border-radius: 14px;
    box-shadow: 0 12px 20px rgba(0, 0, 0, .25);
    color: #fff;
    font-size: 26px;
    line-height: 92px;
}
```
